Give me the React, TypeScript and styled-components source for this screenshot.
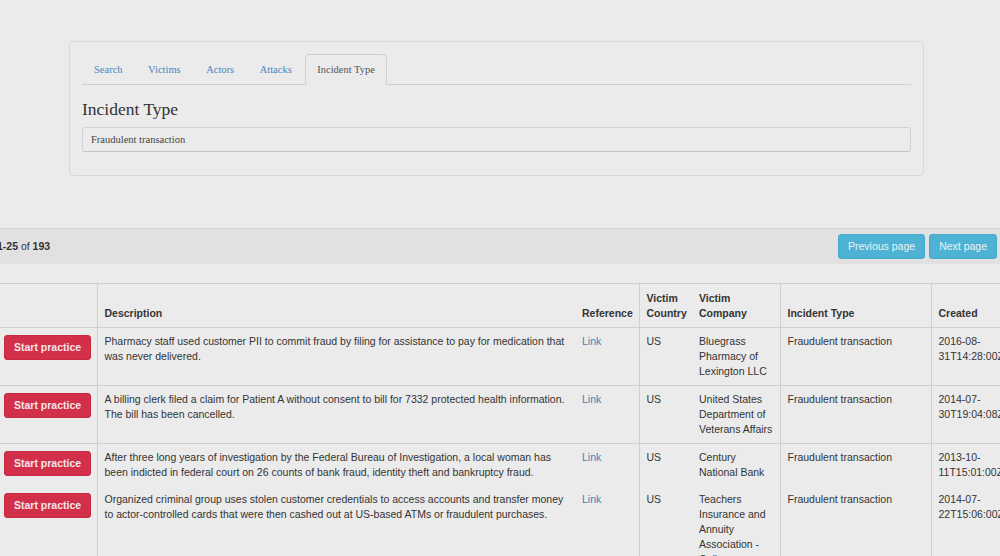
import styled, { createGlobalStyle } from 'styled-components';

const GlobalStyle = createGlobalStyle`
    html, body {
        margin: 0;
        padding: 0;
        background: #ebebeb;
        overflow: hidden;
    }
    body {
        font-family: "Liberation Sans", Arial, sans-serif;
        font-size: 10.5px;
        line-height: 1.428571;
        color: #333;
    }
`

interface Incident {
    description: string
    country: string
    company: string
    type: string
    created: string
    noBorder?: boolean
}

const tabs = ['Search', 'Victims', 'Actors', 'Attacks', 'Incident Type'];

const incidents: Incident[] = [
    {
        description: 'Pharmacy staff used customer PII to commit fraud by filing for assistance to pay for medication that was never delivered.',
        country: 'US',
        company: 'Bluegrass Pharmacy of Lexington LLC',
        type: 'Fraudulent transaction',
        created: '2016-08-31T14:28:00Z',
    },
    {
        description: 'A billing clerk filed a claim for Patient A without consent to bill for 7332 protected health information. The bill has been cancelled.',
        country: 'US',
        company: 'United States Department of Veterans Affairs',
        type: 'Fraudulent transaction',
        created: '2014-07-30T19:04:08Z',
    },
    {
        description: 'After three long years of investigation by the Federal Bureau of Investigation, a local woman has been indicted in federal court on 26 counts of bank fraud, identity theft and bankruptcy fraud.',
        country: 'US',
        company: 'Century National Bank',
        type: 'Fraudulent transaction',
        created: '2013-10-11T15:01:00Z',
    },
    {
        description: 'Organized criminal group uses stolen customer credentials to access accounts and transfer money to actor-controlled cards that were then cashed out at US-based ATMs or fraudulent purchases.',
        country: 'US',
        company: 'Teachers Insurance and Annuity Association - College Retirement Equities Fund',
        type: 'Fraudulent transaction',
        created: '2014-07-22T15:06:00Z',
        noBorder: true,
    },
];

const App = () => {
    return (
        <>
            <GlobalStyle />
            <Panel>
                <Tabs>
                    {tabs.map((t) => (
                        <Tab key={t} $active={t === 'Incident Type'}>{t}</Tab>
                    ))}
                </Tabs>
                <Title>Incident Type</Title>
                <Well>Fraudulent transaction</Well>
            </Panel>
            <Results>
                <Pager>
                    <Count><b>1-25</b> of <b>193</b></Count>
                    <Buttons>
                        <InfoButton>Previous page</InfoButton>
                        <InfoButton>Next page</InfoButton>
                    </Buttons>
                </Pager>
                <Table>
                    <colgroup>
                        <col style={{ width: 100 }} />
                        <col style={{ width: 478 }} />
                        <col style={{ width: 64 }} />
                        <col style={{ width: 53 }} />
                        <col style={{ width: 88 }} />
                        <col style={{ width: 151 }} />
                        <col style={{ width: 90 }} />
                    </colgroup>
                    <thead>
                        <tr>
                            <Th></Th>
                            <Th $divider>Description</Th>
                            <Th>Reference</Th>
                            <Th $divider>Victim Country</Th>
                            <Th>Victim Company</Th>
                            <Th $divider>Incident Type</Th>
                            <Th $divider>Created</Th>
                        </tr>
                    </thead>
                    <tbody>
                        {incidents.map((i) => (
                            <tr key={i.created}>
                                <Td $noBorder={i.noBorder}><PracticeButton>Start practice</PracticeButton></Td>
                                <Td $divider $noBorder={i.noBorder}>{i.description}</Td>
                                <Td $noBorder={i.noBorder}><Link>Link</Link></Td>
                                <Td $divider $noBorder={i.noBorder}>{i.country}</Td>
                                <Td $noBorder={i.noBorder}>{i.company}</Td>
                                <Td $divider $noBorder={i.noBorder}>{i.type}</Td>
                                <Td $divider $noBorder={i.noBorder}>{i.created}</Td>
                            </tr>
                        ))}
                    </tbody>
                </Table>
            </Results>
        </>
    );
};

export default App;

const Panel = styled.div`
    box-sizing: border-box;
    width: 855px;
    margin: 41px 0 0 69px;
    padding: 12px 12px 23px;
    border: 1px solid #d9d9d9;
    border-radius: 4px;
    font-family: "Liberation Serif", "Times New Roman", serif;
`
const Tabs = styled.div`
    display: flex;
    border-bottom: 1px solid #d0d0d0;
    height: 30px;
`
const Tab = styled.div<{ $active?: boolean }>`
    padding: 7px 11px 7px;
    margin-right: 1.5px;
    margin-bottom: -1px;
    border: 1px solid ${(p) => (p.$active ? '#d0d0d0' : 'transparent')};
    border-bottom-color: ${(p) => (p.$active ? '#ebebeb' : 'transparent')};
    border-radius: 4px 4px 0 0;
    color: ${(p) => (p.$active ? '#555' : '#4a86bb')};
    line-height: 15px;
`
const Title = styled.h3`
    margin: 15px 0 8px;
    font-size: 17.5px;
    font-weight: normal;
    line-height: 1.1;
    color: #333;
`
const Well = styled.div`
    padding: 4px 8px;
    border: 1px solid #d3d3d3;
    border-bottom-color: #c4c4c4;
    border-radius: 3px;
    line-height: 15px;
    color: #444;
`
const Results = styled.div`
    margin: 52px 0 0 -3px;
    width: 1030px;
`
const Pager = styled.div`
    display: flex;
    justify-content: space-between;
    align-items: center;
    height: 35px;
    padding: 0 30px 0 0;
    border-top: 1px solid #d6d6d6;
    background: #e1e1e1;
`
const Count = styled.div`
    color: #333;
    margin-top: -1px;
`
const Buttons = styled.div`
    display: flex;
    gap: 4px;
    margin-top: -1px;
`
const InfoButton = styled.button`
    font-family: "Liberation Sans", Arial, sans-serif;
    font-size: 10.5px;
    line-height: 15px;
    padding: 4px 9px;
    border: 1px solid #45aacc;
    border-radius: 3px;
    background: #4db2d3;
    color: #e8f4f8;
`
const Table = styled.table`
    margin-top: 19px;
    border-collapse: collapse;
    table-layout: fixed;
    width: 1024px;
    border-top: 1px solid #cfcfcf;
`
const Th = styled.th<{ $divider?: boolean }>`
    padding: 7px 5px 6px 7px;
    text-align: left;
    vertical-align: bottom;
    font-weight: bold;
    border-bottom: 1px solid #cfcfcf;
    border-left: ${(p) => (p.$divider ? '1px solid #cfcfcf' : 'none')};
`
const Td = styled.td<{ $divider?: boolean; $noBorder?: boolean }>`
    padding: 6px 5px 6px 7px;
    vertical-align: top;
    border-top: ${(p) => (p.$noBorder ? 'none' : '1px solid #cfcfcf')};
    border-left: ${(p) => (p.$divider ? '1px solid #cfcfcf' : 'none')};
`
const PracticeButton = styled.button`
    font-family: "Liberation Sans", Arial, sans-serif;
    font-size: 10.5px;
    font-weight: bold;
    line-height: 15px;
    padding: 4px 9px;
    border: 1px solid #c9283f;
    border-radius: 3px;
    background: #d2304a;
    color: #f6e6e9;
    white-space: nowrap;
    margin-top: 1px;
`
const Link = styled.a`
    color: #3f7fb6;
`
